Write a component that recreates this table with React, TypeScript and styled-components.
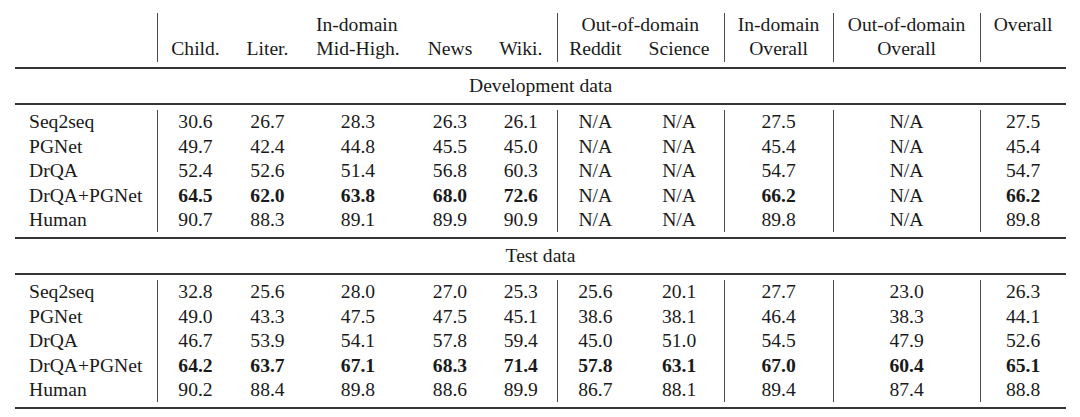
import React from "react";
import styled, { createGlobalStyle } from "styled-components";

const Global = createGlobalStyle`
  html, body { margin: 0; padding: 0; background: #ffffff; }
  body { font-family: "Liberation Serif", "Times New Roman", serif; color: #1a1a1a; }
`;

const COLS = [142, 77, 67, 114, 70, 71.5, 77.5, 90, 109, 147, 86];
const SEP = new Set([1, 6, 8, 9, 10]);
const ROW_H = 24.4;

const Page = styled.div`
  padding: 13px 0 0 15px;
`;

const Table = styled.table`
  border-collapse: separate;
  border-spacing: 0;
  table-layout: fixed;
  width: ${COLS.reduce((a, b) => a + b, 0)}px;
  font-family: "Liberation Serif", "Times New Roman", serif;
  font-size: 19.6px;
  line-height: ${ROW_H}px;
  color: #1a1a1a;
`;

const Cell = styled.td<{ $sep?: boolean; $bold?: boolean }>`
  padding: 0;
  height: ${ROW_H}px;
  text-align: center;
  vertical-align: middle;
  white-space: nowrap;
  font-family: "Liberation Serif", "Times New Roman", serif;
  font-weight: ${(p) => (p.$bold ? 700 : 400)};
  box-shadow: ${(p) => (p.$sep ? "inset 1px 0 0 #4a4a4a" : "none")};
`;

const LabelCell = styled(Cell)`
  padding: 0 0 0 14px;
  text-align: left;
`;

const RuleCell = styled.td`
  padding: 0;
  height: 2px;
  font-size: 0;
  line-height: 0;
  background: #343434;
`;

const GapCell = styled.td<{ $h: number }>`
  padding: 0;
  height: ${(p) => p.$h}px;
  font-size: 0;
  line-height: 0;
`;

const SectionCell = styled.td`
  padding: 0;
  height: 34px;
  text-align: center;
  vertical-align: middle;
  font-family: "Liberation Serif", "Times New Roman", serif;
`;

type Row = { name: string; values: string[]; bold?: boolean };

const dev: Row[] = [
  { name: "Seq2seq", values: ["30.6", "26.7", "28.3", "26.3", "26.1", "N/A", "N/A", "27.5", "N/A", "27.5"] },
  { name: "PGNet", values: ["49.7", "42.4", "44.8", "45.5", "45.0", "N/A", "N/A", "45.4", "N/A", "45.4"] },
  { name: "DrQA", values: ["52.4", "52.6", "51.4", "56.8", "60.3", "N/A", "N/A", "54.7", "N/A", "54.7"] },
  { name: "DrQA+PGNet", bold: true, values: ["64.5", "62.0", "63.8", "68.0", "72.6", "N/A", "N/A", "66.2", "N/A", "66.2"] },
  { name: "Human", values: ["90.7", "88.3", "89.1", "89.9", "90.9", "N/A", "N/A", "89.8", "N/A", "89.8"] },
];

const test: Row[] = [
  { name: "Seq2seq", values: ["32.8", "25.6", "28.0", "27.0", "25.3", "25.6", "20.1", "27.7", "23.0", "26.3"] },
  { name: "PGNet", values: ["49.0", "43.3", "47.5", "47.5", "45.1", "38.6", "38.1", "46.4", "38.3", "44.1"] },
  { name: "DrQA", values: ["46.7", "53.9", "54.1", "57.8", "59.4", "45.0", "51.0", "54.5", "47.9", "52.6"] },
  { name: "DrQA+PGNet", bold: true, values: ["64.2", "63.7", "67.1", "68.3", "71.4", "57.8", "63.1", "67.0", "60.4", "65.1"] },
  { name: "Human", values: ["90.2", "88.4", "89.8", "88.6", "89.9", "86.7", "88.1", "89.4", "87.4", "88.8"] },
];

const Rule = () => (
  <tr>
    <RuleCell colSpan={11} />
  </tr>
);

const Gap = ({ h }: { h: number }) => (
  <tr>
    <GapCell colSpan={11} $h={h} />
  </tr>
);

const Section = ({ title, rows }: { title: string; rows: Row[] }) => (
  <>
    <tr>
      <SectionCell colSpan={11}>{title}</SectionCell>
    </tr>
    <Rule />
    <Gap h={5.3} />
    {rows.map((r) => (
      <tr key={r.name}>
        <LabelCell>{r.name}</LabelCell>
        {r.values.map((v, i) => (
          <Cell key={i} $sep={SEP.has(i + 1)} $bold={r.bold && v !== "N/A"}>
            {v}
          </Cell>
        ))}
      </tr>
    ))}
    <Gap h={4.7} />
    <Rule />
  </>
);

export default function App() {
  return (
    <>
      <Global />
      <Page>
        <Table>
          <colgroup>
            {COLS.map((w, i) => (
              <col key={i} style={{ width: w }} />
            ))}
          </colgroup>
          <tbody>
            <tr>
              <Cell />
              <Cell $sep colSpan={5}>In-domain</Cell>
              <Cell $sep colSpan={2}>Out-of-domain</Cell>
              <Cell $sep>In-domain</Cell>
              <Cell $sep>Out-of-domain</Cell>
              <Cell $sep>Overall</Cell>
            </tr>
            <tr>
              <Cell />
              <Cell $sep>Child.</Cell>
              <Cell>Liter.</Cell>
              <Cell>Mid-High.</Cell>
              <Cell>News</Cell>
              <Cell>Wiki.</Cell>
              <Cell $sep>Reddit</Cell>
              <Cell>Science</Cell>
              <Cell $sep>Overall</Cell>
              <Cell $sep>Overall</Cell>
              <Cell $sep />
            </tr>
            <Gap h={5.2} />
            <Rule />
            <Section title="Development data" rows={dev} />
            <Section title="Test data" rows={test} />
          </tbody>
        </Table>
      </Page>
    </>
  );
}
